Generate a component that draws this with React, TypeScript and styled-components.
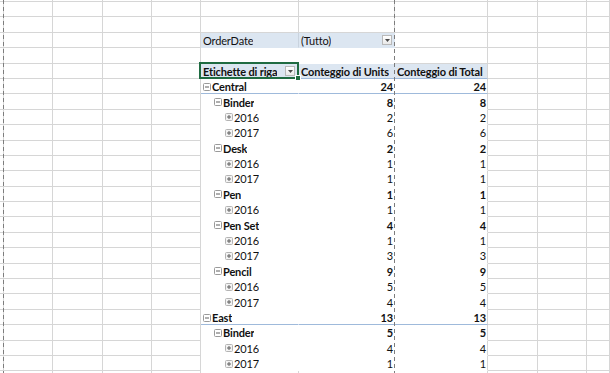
import React from "react";
import styled, { createGlobalStyle } from "styled-components";

const GlobalStyle = createGlobalStyle`
  html, body { margin: 0; padding: 0; background: #ffffff; }
  body { font-family: Lato, "Open Sans", sans-serif; }
`;

/* widths of the sheet columns; the pivot occupies columns 5..7 */
const COLUMN_WIDTHS = [4, 49, 50, 49, 49, 98, 96, 93, 50, 49, 40];
const ROW_COUNT = 26;

const Sheet = styled.div`
  position: relative;
  width: 610px;
  height: 373px;
  overflow: hidden;
  display: grid;
  grid-template-columns: ${COLUMN_WIDTHS.map((w, i) => (i === COLUMN_WIDTHS.length - 1 ? "1fr" : `${w}px`)).join(" ")};
  grid-template-rows: 2px repeat(${ROW_COUNT - 1}, 15.4px);
  font-family: Lato, "Open Sans", sans-serif;
  font-size: 11px;
  letter-spacing: -0.15px;
  color: #111;
  background: #fff;
`;

const GridCell = styled.div`
  box-sizing: border-box;
  border-right: 1px solid #d6d6d6;
  border-bottom: 1px solid #d6d6d6;
`;

const PageBreak = styled.div<{ $x: number }>`
  position: absolute;
  top: 0;
  bottom: 0;
  left: ${(p) => p.$x}px;
  width: 1px;
  z-index: 3;
  background: repeating-linear-gradient(to bottom, #7d7d7d 0 4px, transparent 4px 7px);
`;

const PivotCell = styled.div<{
  $fill?: boolean;
  $rule?: boolean;
  $edge?: boolean;
  $divider?: boolean;
  $bold?: boolean;
  $right?: boolean;
}>`
  position: relative;
  box-sizing: border-box;
  min-width: 0;
  display: flex;
  align-items: center;
  justify-content: ${(p) => (p.$right ? "flex-end" : "flex-start")};
  padding: 1px ${(p) => (p.$right ? "1px" : "2px")} 0 2px;
  background: ${(p) => (p.$fill ? "#dce6f1" : "#ffffff")};
  border-bottom: 1px solid ${(p) => (p.$rule ? "#9fbadb" : "transparent")};
  border-right: 1px solid
    ${(p) => (p.$edge ? "#d6d6d6" : p.$divider ? "#c9d3de" : "transparent")};
  font-weight: ${(p) => (p.$bold ? 700 : 400)};
  white-space: nowrap;
`;

const CellText = styled.span`
  overflow: hidden;
  text-overflow: clip;
`;

const Selection = styled.div`
  position: absolute;
  top: -2px;
  left: -2px;
  right: -1px;
  bottom: -1px;
  border: 2px solid #1f6b41;
  z-index: 2;
  pointer-events: none;

  &::after {
    content: "";
    position: absolute;
    right: -4px;
    bottom: -4px;
    width: 4px;
    height: 4px;
    background: #1f6b41;
    border: 1px solid #ffffff;
  }
`;

const DropButton = styled.span`
  box-sizing: border-box;
  flex: none;
  margin-left: auto;
  width: 10px;
  height: 10px;
  border: 1px solid #b9b9b9;
  background: linear-gradient(#ffffff, #e9e9e9);
  display: flex;
  align-items: center;
  justify-content: center;
`;

const Label = styled.div<{ $level: number }>`
  display: flex;
  align-items: center;
  gap: 1px;
  padding-left: ${(p) => p.$level * 11}px;
  min-width: 0;
`;

function Caret() {
  return (
    <svg width="5" height="3" viewBox="0 0 5 3" aria-hidden>
      <path d="M0 0 H5 L2.5 3 Z" fill="#4a4a4a" />
    </svg>
  );
}

function ToggleIcon({ open }: { open: boolean }) {
  return (
    <svg width="8" height="8" viewBox="0 0 8 8" aria-hidden style={{ flex: "none" }}>
      <rect
        x="0.5"
        y="0.5"
        width="7"
        height="7"
        rx="1"
        fill={open ? "#ffffff" : "#f3f3f3"}
        stroke={open ? "#9a9a9a" : "#b4b4b4"}
      />
      <path d="M2 4 H6" stroke="#5f5f5f" strokeWidth="1" />
      {!open && <path d="M4 2 V6" stroke="#5f5f5f" strokeWidth="1" />}
    </svg>
  );
}

type PivotRow = { label: string; level: 0 | 1 | 2; units: number; total: number };

const PIVOT_ROWS: PivotRow[] = [
  { label: "Central", level: 0, units: 24, total: 24 },
  { label: "Binder", level: 1, units: 8, total: 8 },
  { label: "2016", level: 2, units: 2, total: 2 },
  { label: "2017", level: 2, units: 6, total: 6 },
  { label: "Desk", level: 1, units: 2, total: 2 },
  { label: "2016", level: 2, units: 1, total: 1 },
  { label: "2017", level: 2, units: 1, total: 1 },
  { label: "Pen", level: 1, units: 1, total: 1 },
  { label: "2016", level: 2, units: 1, total: 1 },
  { label: "Pen Set", level: 1, units: 4, total: 4 },
  { label: "2016", level: 2, units: 1, total: 1 },
  { label: "2017", level: 2, units: 3, total: 3 },
  { label: "Pencil", level: 1, units: 9, total: 9 },
  { label: "2016", level: 2, units: 5, total: 5 },
  { label: "2017", level: 2, units: 4, total: 4 },
  { label: "East", level: 0, units: 13, total: 13 },
  { label: "Binder", level: 1, units: 5, total: 5 },
  { label: "2016", level: 2, units: 4, total: 4 },
  { label: "2017", level: 2, units: 1, total: 1 },
];

const FILTER_ROW = 3;
const GAP_ROW = 4;
const HEADER_ROW = 5;
const FIRST_DATA_ROW = 6;

function plainCells(row: number, from: number, to: number) {
  const cells: React.ReactNode[] = [];
  for (let c = from; c <= to; c++) cells.push(<GridCell key={`${row}-${c}`} />);
  return cells;
}

function renderRow(row: number): React.ReactNode[] {
  const left = plainCells(row, 0, 4);
  const right = plainCells(row, 8, 10);

  if (row === FILTER_ROW) {
    return [
      ...left,
      <PivotCell key="f-name" $fill $divider>
        <CellText>OrderDate</CellText>
      </PivotCell>,
      <PivotCell key="f-value" $fill>
        <CellText>(Tutto)</CellText>
        <DropButton>
          <Caret />
        </DropButton>
      </PivotCell>,
      <GridCell key="f-rest" />,
      ...right,
    ];
  }

  if (row === GAP_ROW) {
    return [...left, <PivotCell key="g1" />, <PivotCell key="g2" />, <GridCell key="g3" />, ...right];
  }

  if (row === HEADER_ROW) {
    return [
      ...left,
      <PivotCell key="h1" $fill $rule $bold>
        <CellText>Etichette di riga</CellText>
        <DropButton style={{ marginRight: 1 }}>
          <Caret />
        </DropButton>
        <Selection />
      </PivotCell>,
      <PivotCell key="h2" $fill $rule $bold>
        <CellText>Conteggio di Units</CellText>
      </PivotCell>,
      <PivotCell key="h3" $fill $rule $bold $edge>
        <CellText>Conteggio di Total</CellText>
      </PivotCell>,
      ...right,
    ];
  }

  const item = PIVOT_ROWS[row - FIRST_DATA_ROW];
  if (item) {
    const strong = item.level < 2;
    const ruled = item.level === 0;
    return [
      ...left,
      <PivotCell key="l" $bold={strong} $rule={ruled}>
        <Label $level={item.level}>
          <ToggleIcon open={item.level < 2} />
          <CellText>{item.label}</CellText>
        </Label>
      </PivotCell>,
      <PivotCell key="u" $right $bold={strong} $rule={ruled}>
        {item.units}
      </PivotCell>,
      <PivotCell key="t" $right $bold={strong} $rule={ruled} $edge>
        {item.total}
      </PivotCell>,
      ...right,
    ];
  }

  return plainCells(row, 0, 10);
}

export default function App() {
  const rows: React.ReactNode[] = [];
  for (let r = 0; r < ROW_COUNT; r++) {
    rows.push(<React.Fragment key={r}>{renderRow(r)}</React.Fragment>);
  }
  return (
    <>
      <GlobalStyle />
      <Sheet>
        {rows}
        <PageBreak $x={3} />
        <PageBreak $x={394} />
      </Sheet>
    </>
  );
}
